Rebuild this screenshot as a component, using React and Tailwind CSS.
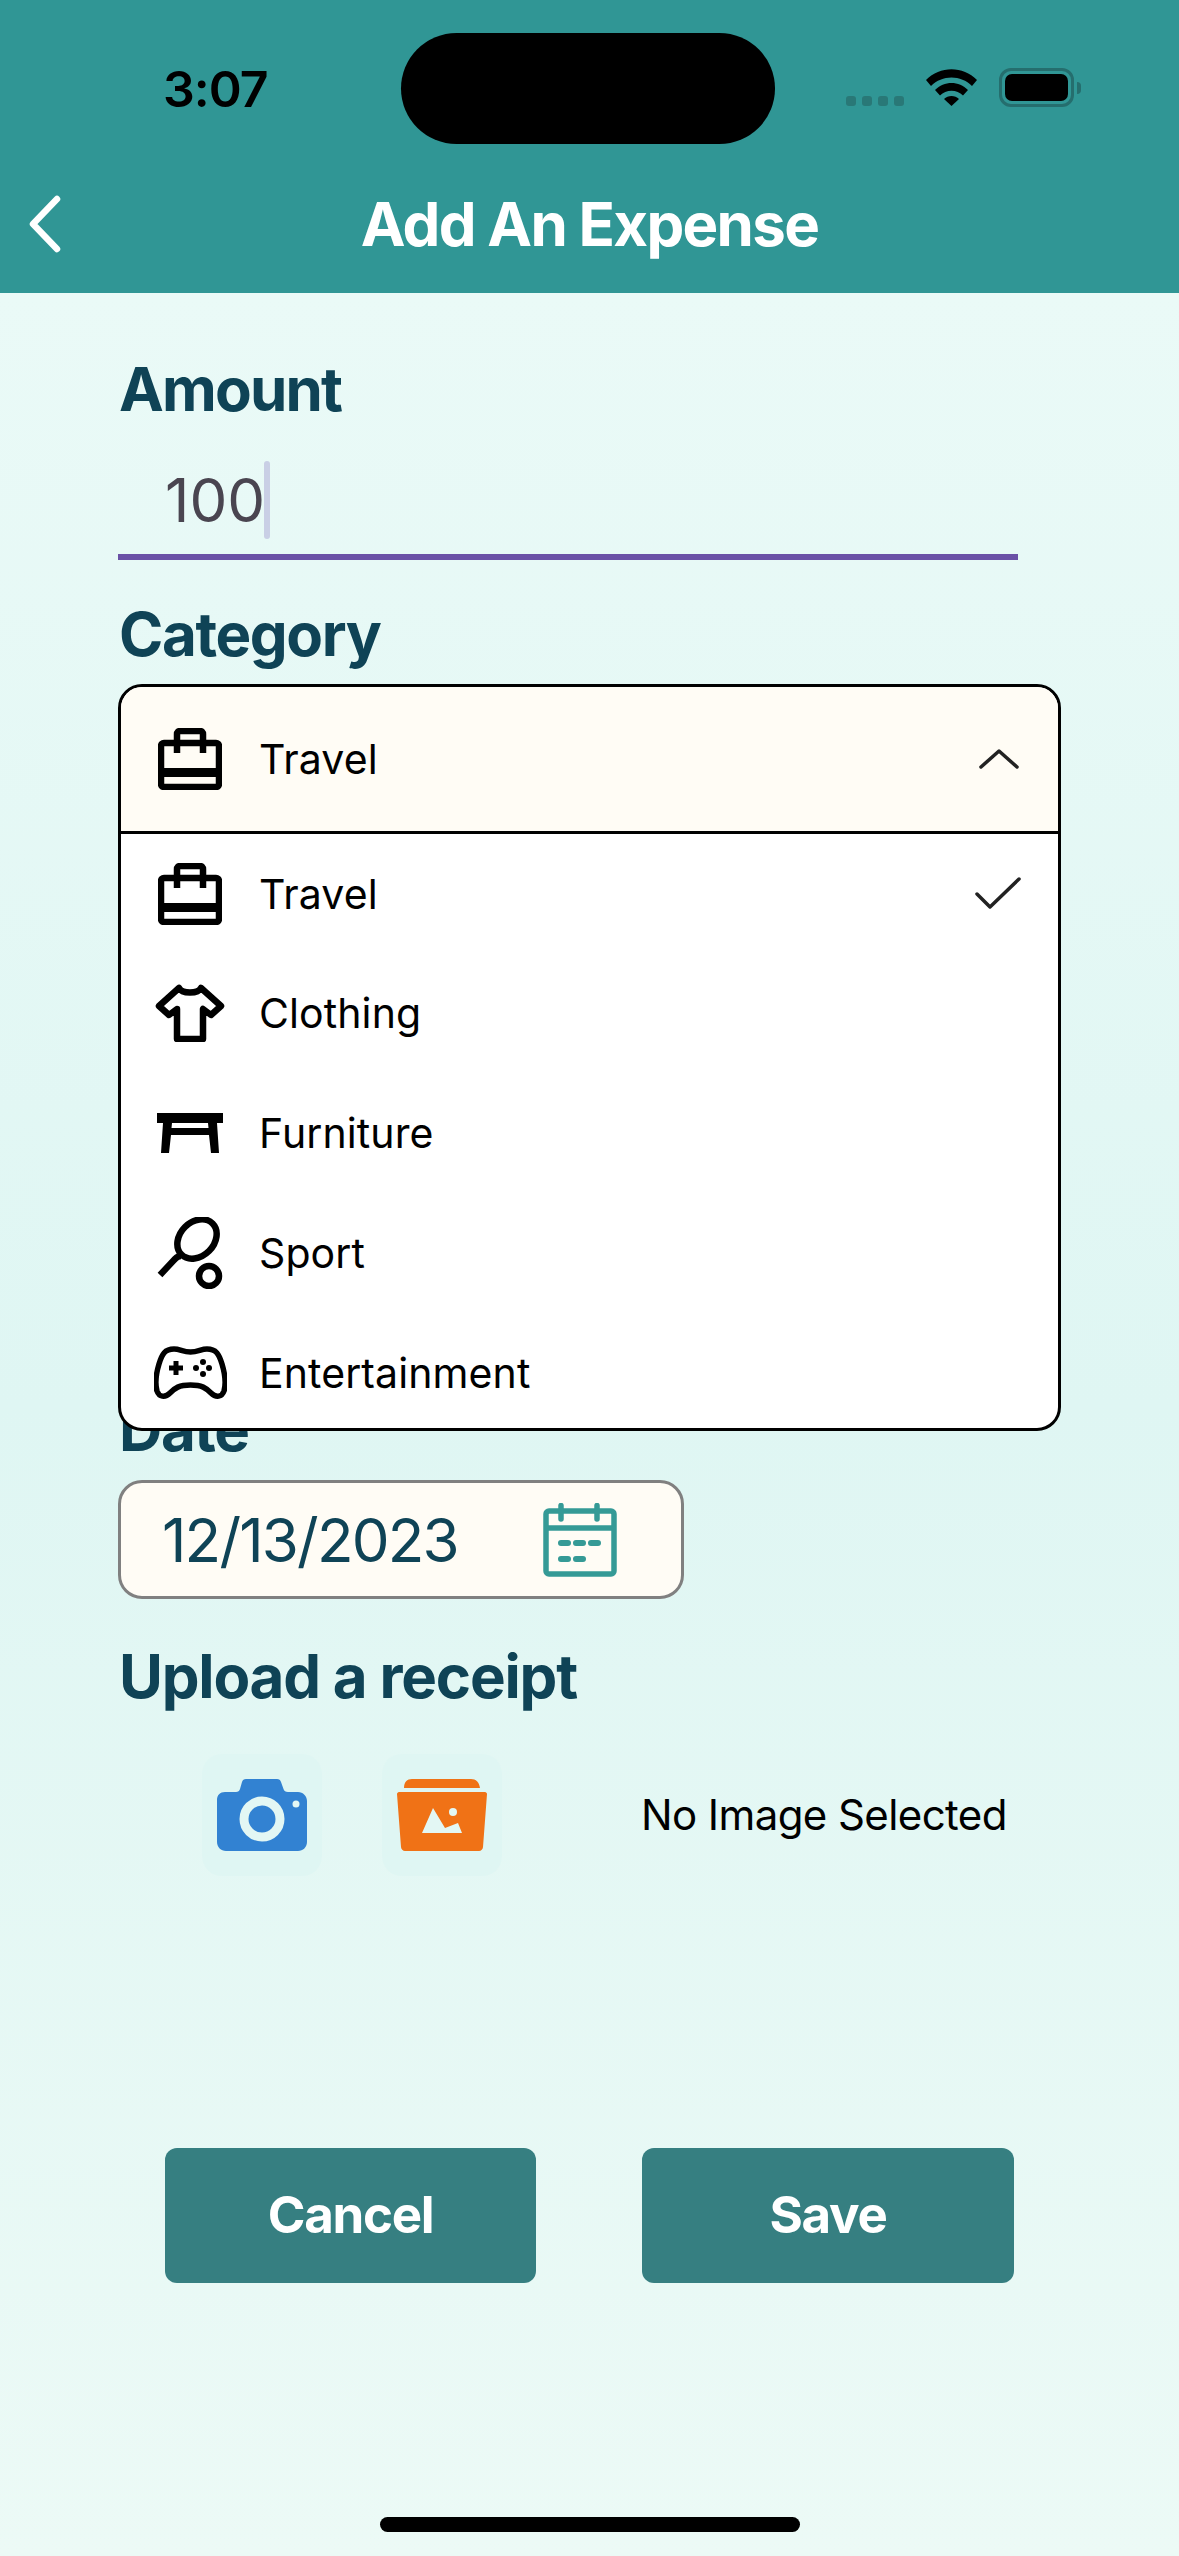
import React from "react";

const Briefcase = () => (
  <svg width="64" height="62" viewBox="0 0 64 62" fill="none" stroke="#000" strokeWidth="6.500">
    <rect x="3" y="15" width="58" height="44" rx="3" />
    <path d="M19 25V6a3 3 0 0 1 3-3h20a3 3 0 0 1 3 3v19" />
    <rect x="1" y="40" width="62" height="9" fill="#000" stroke="none" />
  </svg>
);
const Shirt = () => (
  <svg width="70" height="58" viewBox="0 0 70 58" fill="none" stroke="#000" strokeWidth="6.500" strokeLinejoin="round">
    <path d="M24 4C27 10 43 10 46 4L66 22 56 31 48 25V55H22V25L14 31 4 22Z" />
  </svg>
);
const Table = () => (
  <svg width="66" height="40" viewBox="0 0 66 40" fill="#000">
    <path d="M0 0H66V10H60L62 40H54L52 22H14L12 40H4L6 10H0ZM15 10L14.500 15H51.500L51 10Z" fillRule="evenodd" />
  </svg>
);
const Racket = () => (
  <svg width="66" height="72" viewBox="0 0 66 72" fill="none" stroke="#000" strokeWidth="6.500">
    <ellipse cx="40" cy="22" rx="22" ry="17" transform="rotate(-45 40 22)" />
    <path d="M24 39C20 39 19 41 17 43L3 58" />
    <circle cx="52" cy="59" r="10" />
  </svg>
);
const Gamepad = () => (
  <svg width="73" height="54" viewBox="0 0 73 54" fill="none">
    <path d="M20 3C26 3 29 6 36.500 6S47 3 53 3C62 3 65 8 68 18 71 28 72 38 70 45 68 51 62 52 57 47 52 42 48 39 36.500 39S21 42 16 47C11 52 5 51 3 45 1 38 2 28 5 18 8 8 11 3 20 3Z" stroke="#000" strokeWidth="5.500" strokeLinejoin="round" />
    <path d="M22 15V29M15 22H29" stroke="#000" strokeWidth="5" />
    <g fill="#000">
      <circle cx="49" cy="16" r="3" />
      <circle cx="42" cy="22" r="3" />
      <circle cx="55" cy="22" r="3" />
      <circle cx="49" cy="28" r="3" />
    </g>
  </svg>
);
const Calendar = () => (
  <svg width="74" height="74" viewBox="0 0 74 74" fill="none" stroke="#359a96" strokeWidth="5.500">
    <rect x="3" y="8" width="68" height="63" rx="3" />
    <path d="M3 25H71" />
    <path d="M18 2.500V16M54 2.500V16" strokeLinecap="round" />
    <path d="M18 40H25M33 40H40M48 40H55M18 56H25M33 56H40" strokeLinecap="round" strokeWidth="6" />
  </svg>
);
const Camera = () => (
  <svg width="90" height="72" viewBox="0 0 90 72" fill="none">
    <path d="M8 13H19C21 13 22.500 12 23 10L25 3C25.500 1 27 0 29 0H60C62 0 63.500 1 64 3L66.500 10C67 12 68.500 13 71 13H81C86 13 90 17 90 22V63C90 68 86 72 81 72H9C4 72 0 68 0 63V21C0 16 3 13 8 13Z" fill="#3282d2" />
    <circle cx="45" cy="40" r="18" stroke="#e3f7f4" strokeWidth="9" />
    <circle cx="79" cy="25" r="3.500" fill="#e3f7f4" />
  </svg>
);
const Folder = () => (
  <svg width="90" height="72" viewBox="0 0 90 72" fill="none">
    <path d="M7 9C7 3 10 0 15 0H74C79 0 82 3 83 9Z" fill="#f07216" />
    <path d="M2 13H88C89 13 90 14 90 15L86 68C86 70 84 72 82 72H8C6 72 4 70 4 68L0 15C0 14 1 13 2 13Z" fill="#f07216" />
    <path d="M25 54L36 29 48 49 61 44 65 54Z" fill="#e3f7f4" />
    <circle cx="56" cy="33" r="4" fill="#e3f7f4" />
  </svg>
);

const Row = ({ icon, label, extra, cls }) => (
  <div className={"flex items-center " + cls}>
    <div className="w-[138px] h-[72px] pl-[32px] pr-[32px] flex items-center justify-center">{icon}</div>
    <span className="text-[41px] leading-[50px] text-black flex-1 tracking-[0.1px]">{label}</span>
    {extra}
  </div>
);

const Label = ({ children, cls }) => (
  <div className={"text-[60px] leading-[72px] font-bold text-[#0f4356] " + cls}>{children}</div>
);

export default function App() {
  return (
    <div className="w-[1179px] h-[2556px] overflow-hidden bg-[linear-gradient(180deg,#edfbf8_0%,#dff6f3_55%,#ecfaf6_100%)] font-['Inter',sans-serif]">
      <header className="h-[293px] bg-[#309695]">
        <div className="h-[188px] flex items-start pl-[163px] pt-[33px]">
          <div className="w-[238px] text-[50px] leading-[60px] font-semibold text-black mt-[26px] tracking-[-1px]">3:07</div>
          <div className="w-[374px] h-[111px] rounded-[56px] bg-black" />
          <div className="flex items-start ml-[71px] gap-[22px]">
            <div className="flex gap-[6px] mt-[63px]">
              <span className="w-[10px] h-[10px] rounded-[3px] bg-[#297877]" />
              <span className="w-[10px] h-[10px] rounded-[3px] bg-[#297877]" />
              <span className="w-[10px] h-[10px] rounded-[3px] bg-[#297877]" />
              <span className="w-[10px] h-[10px] rounded-[3px] bg-[#297877]" />
            </div>
            <svg className="mt-[36px]" width="51" height="37" viewBox="0 0 51 37" fill="#000">
              <path d="M0 11C14 -3.500 37 -3.500 51 11L46 17C35 5.500 16 5.500 5 17Z" />
              <path d="M9 21C18 11.500 33 11.500 42 21L37 26.500C31 20 20 20 14 26.500Z" />
              <path d="M18 30C22 26 29 26 33 30L25.500 37Z" />
            </svg>
            <div className="flex items-center mt-[35px]">
              <div className="w-[75px] h-[39px] rounded-[12px] border-[3px] border-[#256e6e] p-[3px]">
                <div className="w-full h-full rounded-[7px] bg-black" />
              </div>
              <div className="w-[4px] h-[12px] ml-[3px] rounded-r-[4px] bg-[#256e6e]" />
            </div>
          </div>
        </div>
        <div className="h-[72px] grid grid-cols-[1fr_auto_1fr] items-center">
          <svg className="ml-[28px]" width="34" height="58" viewBox="0 0 34 58" fill="none" stroke="#fff" strokeWidth="6.500" strokeLinecap="round" strokeLinejoin="round">
            <path d="M29 4L5 29 29 54" />
          </svg>
          <div className="text-[60px] leading-[72px] font-bold text-white tracking-[-1.7px]">Add An Expense</div>
          <div />
        </div>
      </header>

      <main className="pt-[60px]">
        <Label cls="ml-[119px] tracking-[-1.8px]">Amount</Label>
        <div className="ml-[118px] w-[900px] h-[135px] pt-[39px] border-b-[6px] border-[#6a51a6]">
          <div className="flex items-center h-[72px] pl-[47px]">
            <span className="text-[60px] leading-[72px] text-[#4a4550]">100</span>
            <span className="w-[6px] h-[78px] rounded-[3px] bg-[#c9cfe5] -ml-[1px]" />
          </div>
        </div>
        <Label cls="ml-[119px] mt-[38px] tracking-[-1.400px]">Category</Label>

        <div className="relative h-[723px]">
          <div className="absolute z-10 left-[118px] top-[14px] w-[943px] h-[747px] rounded-[24px] border-[3px] border-black bg-white overflow-hidden">
            <Row
              cls="h-[147px] bg-[#fffcf5] border-b-[3px] border-black"
              icon={<Briefcase />}
              label="Travel"
              extra={
                <svg className="mr-[38px]" width="42" height="22" viewBox="0 0 42 22" fill="none" stroke="#222" strokeWidth="3.500" strokeLinecap="round" strokeLinejoin="round">
                  <path d="M3 19L21 3 39 19" />
                </svg>
              }
            />
            <div>
              <Row
                cls="h-[119px]"
                icon={<Briefcase />}
                label="Travel"
                extra={
                  <svg className="mr-[37px]" width="46" height="34" viewBox="0 0 46 34" fill="none" stroke="#222" strokeWidth="3.500" strokeLinecap="round" strokeLinejoin="round">
                    <path d="M2 17L15 30 44 2" />
                  </svg>
                }
              />
              <Row cls="h-[120px]" icon={<Shirt />} label="Clothing" />
              <Row cls="h-[120px]" icon={<Table />} label="Furniture" />
              <Row cls="h-[120px]" icon={<Racket />} label="Sport" />
              <Row cls="h-[120px]" icon={<Gamepad />} label="Entertainment" />
            </div>
          </div>
        </div>

        <Label cls="ml-[119px] tracking-[-1.400px]">Date</Label>
        <div className="ml-[118px] mt-[15px] w-[566px] h-[119px] rounded-[24px] border-[3px] border-[#808080] bg-[#fffcf5] flex items-center pl-[41px]">
          <span className="w-[381px] text-[60px] leading-[72px] text-[#0f4356] tracking-[-1.8px]">12/13/2023</span>
          <Calendar />
        </div>
        <Label cls="ml-[119px] mt-[41px] tracking-[-1.200px]">Upload a receipt</Label>
        <div className="flex items-center mt-[42px] ml-[202px]">
          <div className="w-[120px] h-[122px] rounded-[20px] bg-[#dff6f3] flex items-center justify-center">
            <Camera />
          </div>
          <div className="w-[120px] h-[122px] ml-[60px] rounded-[20px] bg-[#dff6f3] flex items-center justify-center">
            <Folder />
          </div>
          <span className="ml-[139px] text-[42px] leading-[50px] text-black tracking-[-0.6px]">No Image Selected</span>
        </div>
        <div className="flex mt-[272px] ml-[165px] gap-[106px]">
          <button className="w-[371px] h-[135px] rounded-[12px] bg-[#367f81] text-white text-[51px] font-bold tracking-[-1.300px]">Cancel</button>
          <button className="w-[372px] h-[135px] rounded-[12px] bg-[#367f81] text-white text-[51px] font-bold tracking-[-1.300px]">Save</button>
        </div>
        <div className="w-[420px] h-[15px] rounded-full bg-black mx-auto mt-[234px]" />
      </main>
    </div>
  );
}
